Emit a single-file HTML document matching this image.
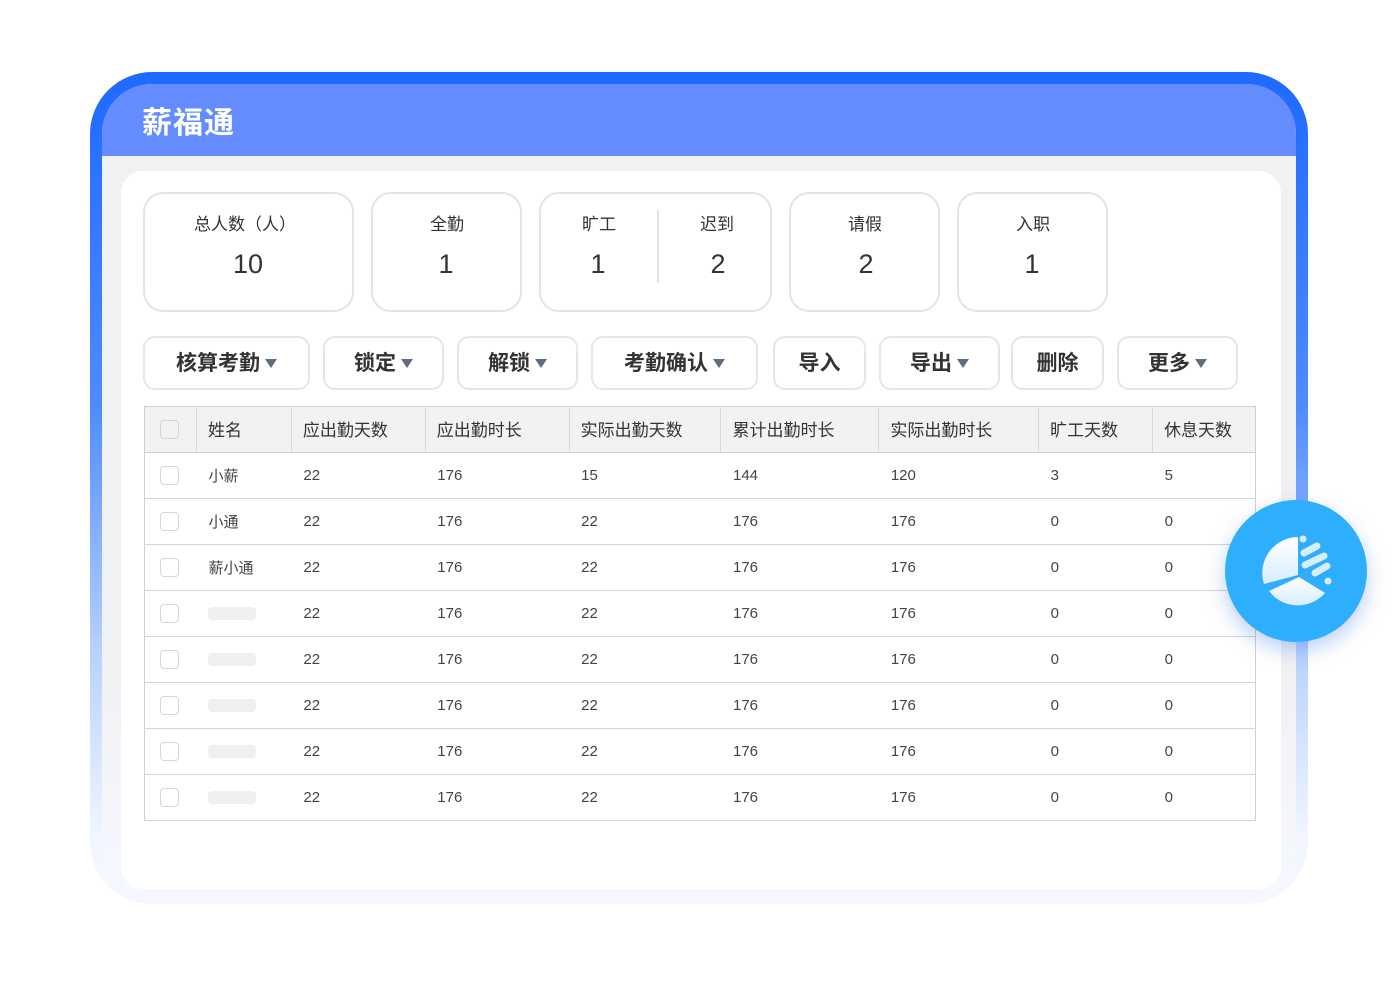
<!DOCTYPE html>
<html><head><meta charset="utf-8"><style>
*{margin:0;padding:0;box-sizing:border-box}
body{width:1400px;height:1000px;background:#fff;position:relative;overflow:hidden;font-family:"Liberation Sans","Noto Sans CJK SC",sans-serif;color:#333}
.outer{position:absolute;left:90px;top:72px;width:1218px;height:832px;border-radius:62px;background:linear-gradient(#1e69ff 0%,#4f8bff 40%,#b9d2ff 70%,#f1f6ff 92%,#f5f8fe 100%)}
.inner{position:absolute;left:102px;top:84px;width:1194px;height:808px;border-radius:50px 50px 40px 40px;overflow:hidden;background:linear-gradient(#f0f1f3 0%,#f0f1f3 70%,#f5f8fd 100%)}
.hdr{height:72px;background:#648cff;color:#fff;font-size:30px;font-weight:bold;padding:14px 0 0 40px;letter-spacing:1px}
.panel{position:absolute;left:121px;top:171px;width:1160px;height:718px;background:#fff;border-radius:22px}
.card{position:absolute;top:192px;height:120px;border:2px solid #e4e4e4;border-radius:20px;background:#fff}
.lab{position:absolute;top:210px;font-size:17px;color:#333;text-align:center;width:120px;margin-left:-60px}
.num{position:absolute;top:249px;font-size:27px;color:#333;text-align:center;width:120px;margin-left:-60px}
.btn{position:absolute;top:336px;height:54px;border:2px solid #e6e6e6;border-radius:12px;font-size:21px;font-weight:bold;color:#333;display:flex;align-items:center;justify-content:center;background:#fff;padding-bottom:3px}
.tri{display:inline-block;width:0;height:0;border-left:6px solid transparent;border-right:6px solid transparent;border-top:9px solid #5f6b80;margin-left:5px;margin-top:3px}
table{position:absolute;left:144px;top:406px;width:1112px;border-collapse:collapse;font-size:15px;border:1px solid #cfcfcf}
th{background:#f2f2f2;font-weight:normal;font-size:17px;height:46px;text-align:left;padding-left:11px;border-right:1px solid #d8d8d8;border-bottom:1px solid #d0d0d0;color:#333;padding-bottom:2px}
td{height:46px;padding-left:12px;border-bottom:1px solid #d5d5d5;color:#444;padding-bottom:1px}
th:last-child{border-right:none}
.cb{display:inline-block;width:19px;height:19px;border:1px solid #d6d6d6;border-radius:4px;background:#fff;vertical-align:middle}
.ph{display:inline-block;width:48px;height:13px;background:#f0f0f0;border-radius:4px;vertical-align:middle}
.fab{position:absolute;left:1225px;top:500px;width:142px;height:142px;border-radius:50%;background:#2eaefc;box-shadow:0 8px 20px rgba(60,120,230,.35)}
</style></head><body>
<div class="outer"></div>
<div class="inner"><div class="hdr">薪福通</div></div>
<div class="panel"></div>

<div class="card" style="left:143px;width:211px"></div>
<div class="card" style="left:371px;width:151px"></div>
<div class="card" style="left:539px;width:233px"></div>
<div style="position:absolute;left:657px;top:210px;width:2px;height:73px;background:#e4e4e4"></div>
<div class="card" style="left:789px;width:151px"></div>
<div class="card" style="left:957px;width:151px"></div>
<div class="lab" style="left:245px">总人数（人）</div><div class="num" style="left:248px">10</div>
<div class="lab" style="left:447px">全勤</div><div class="num" style="left:446px">1</div>
<div class="lab" style="left:599px">旷工</div><div class="num" style="left:598px">1</div>
<div class="lab" style="left:717px">迟到</div><div class="num" style="left:718px">2</div>
<div class="lab" style="left:865px">请假</div><div class="num" style="left:866px">2</div>
<div class="lab" style="left:1033px">入职</div><div class="num" style="left:1032px">1</div>

<div class="btn" style="left:143px;width:167px">核算考勤<span class="tri"></span></div>
<div class="btn" style="left:323px;width:121px">锁定<span class="tri"></span></div>
<div class="btn" style="left:457px;width:121px">解锁<span class="tri"></span></div>
<div class="btn" style="left:591px;width:167px">考勤确认<span class="tri"></span></div>
<div class="btn" style="left:773px;width:93px">导入</div>
<div class="btn" style="left:879px;width:121px">导出<span class="tri"></span></div>
<div class="btn" style="left:1011px;width:93px">删除</div>
<div class="btn" style="left:1117px;width:121px">更多<span class="tri"></span></div>

<table>
<colgroup><col style="width:52px"><col style="width:95px"><col style="width:134px"><col style="width:144px"><col style="width:152px"><col style="width:158px"><col style="width:160px"><col style="width:114px"><col style="width:103px"></colgroup>
<tr><th style="padding-left:15px"><span class="cb" style="background:#f2f2f2"></span></th><th>姓名</th><th>应出勤天数</th><th>应出勤时长</th><th>实际出勤天数</th><th>累计出勤时长</th><th>实际出勤时长</th><th>旷工天数</th><th>休息天数</th></tr>
<tr><td style="padding-left:15px"><span class="cb"></span></td><td>小薪</td><td>22</td><td>176</td><td>15</td><td>144</td><td>120</td><td>3</td><td>5</td></tr>
<tr><td style="padding-left:15px"><span class="cb"></span></td><td>小通</td><td>22</td><td>176</td><td>22</td><td>176</td><td>176</td><td>0</td><td>0</td></tr>
<tr><td style="padding-left:15px"><span class="cb"></span></td><td>薪小通</td><td>22</td><td>176</td><td>22</td><td>176</td><td>176</td><td>0</td><td>0</td></tr>
<tr><td style="padding-left:15px"><span class="cb"></span></td><td><span class="ph"></span></td><td>22</td><td>176</td><td>22</td><td>176</td><td>176</td><td>0</td><td>0</td></tr>
<tr><td style="padding-left:15px"><span class="cb"></span></td><td><span class="ph"></span></td><td>22</td><td>176</td><td>22</td><td>176</td><td>176</td><td>0</td><td>0</td></tr>
<tr><td style="padding-left:15px;height:44px"><span class="cb"></span></td><td><span class="ph"></span></td><td>22</td><td>176</td><td>22</td><td>176</td><td>176</td><td>0</td><td>0</td></tr>
<tr><td style="padding-left:15px"><span class="cb"></span></td><td><span class="ph"></span></td><td>22</td><td>176</td><td>22</td><td>176</td><td>176</td><td>0</td><td>0</td></tr>
<tr><td style="padding-left:15px;height:46px"><span class="cb"></span></td><td><span class="ph"></span></td><td>22</td><td>176</td><td>22</td><td>176</td><td>176</td><td>0</td><td>0</td></tr>
</table>

<div class="fab"><svg width="142" height="142" viewBox="0 0 142 142">
<defs><linearGradient id="g" x1="0" y1="0" x2="0" y2="1"><stop offset="0" stop-color="#fff"/><stop offset="1" stop-color="#d6eefe"/></linearGradient></defs>
<path d="M73 37 A36 36 0 0 0 39 84 L73 75 Z" fill="url(#g)"/>
<path d="M44 91 L74 77 L100 93 A36 36 0 0 1 44 91 Z" fill="url(#g)"/>
<circle cx="78" cy="39" r="3.5" fill="#d6eefe"/>
<g stroke="#d6eefe" stroke-width="7" stroke-linecap="round">
<line x1="79" y1="53" x2="92" y2="46"/><line x1="80" y1="65" x2="99" y2="56"/><line x1="90" y1="73" x2="102" y2="66"/></g>
<circle cx="103" cy="81" r="3.5" fill="#d6eefe"/>
</svg></div>
</body></html>
